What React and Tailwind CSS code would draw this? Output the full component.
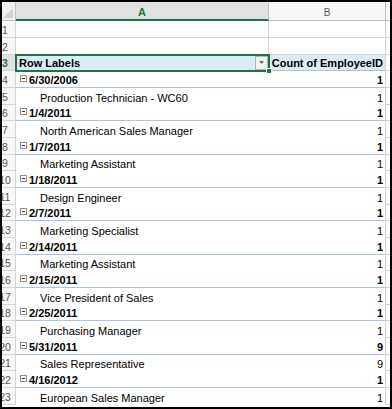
import React from "react";

const rows = [
  { n: 4, label: "6/30/2006", value: 1, date: true },
  { n: 5, label: "Production Technician - WC60", value: 1 },
  { n: 6, label: "1/4/2011", value: 1, date: true },
  { n: 7, label: "North American Sales Manager", value: 1 },
  { n: 8, label: "1/7/2011", value: 1, date: true },
  { n: 9, label: "Marketing Assistant", value: 1 },
  { n: 10, label: "1/18/2011", value: 1, date: true },
  { n: 11, label: "Design Engineer", value: 1 },
  { n: 12, label: "2/7/2011", value: 1, date: true },
  { n: 13, label: "Marketing Specialist", value: 1 },
  { n: 14, label: "2/14/2011", value: 1, date: true },
  { n: 15, label: "Marketing Assistant", value: 1 },
  { n: 16, label: "2/15/2011", value: 1, date: true },
  { n: 17, label: "Vice President of Sales", value: 1 },
  { n: 18, label: "2/25/2011", value: 1, date: true },
  { n: 19, label: "Purchasing Manager", value: 1 },
  { n: 20, label: "5/31/2011", value: 9, date: true },
  { n: 21, label: "Sales Representative", value: 9 },
  { n: 22, label: "4/16/2012", value: 1, date: true },
  { n: 23, label: "European Sales Manager", value: 1 },
];

function rowHeight(n) {
  return n % 3 === 0 ? "h-[16px]" : "h-[17px]";
}

function RowNum({ n, active }) {
  return (
    <div
      className={
        active
          ? "flex items-center justify-center pr-[5px] pt-[2px] border-r border-b border-[#d4d4d4] bg-[#e1e1e1] text-[10.5px] font-bold text-[#217346] whitespace-nowrap"
          : "flex items-center justify-center pr-[5px] pt-[2px] border-r border-b border-[#d4d4d4] bg-[#f8f8f8] text-[10.5px] text-[#555] whitespace-nowrap"
      }
    >
      {n}
    </div>
  );
}

function Collapse() {
  return (
    <div className="w-[7px] h-[7px] mb-[5px] mr-[2px] border border-[#8f8f8f] bg-white flex items-center justify-center shrink-0">
      <div className="w-[3px] h-px bg-[#333]" />
    </div>
  );
}

function PivotRow({ row }) {
  return (
    <div className={"grid grid-cols-[16px_253px_116px_7px] " + rowHeight(row.n)}>
      <RowNum n={row.n} />
      {row.date ? (
        <>
          <div className="flex items-end pl-[4px] border-b border-[#a9c4e4] font-bold">
            <Collapse />
            <span>{row.label}</span>
          </div>
          <div className="flex items-end justify-end pr-[2px] border-b border-[#a9c4e4] font-bold">
            {row.value}
          </div>
        </>
      ) : (
        <>
          <div className="flex items-end pl-[24px]">{row.label}</div>
          <div className="flex items-end justify-end pr-[2px]">{row.value}</div>
        </>
      )}
      <div className="border-l border-b border-[#d4d4d4]" />
    </div>
  );
}

export default function App() {
  return (
    <div className="relative w-[392px] h-[409px] overflow-hidden bg-white text-black text-[11px] leading-[13px] font-['Liberation_Sans',Arial,sans-serif]">
      {/* column headers */}
      <div className="grid grid-cols-[16px_253px_116px_7px] h-[21px]">
        <div className="relative border-r border-b border-[#bfbfbf] bg-[#f0f0f0]">
          <svg className="absolute right-[2px] bottom-[2px]" width="10" height="10" viewBox="0 0 10 10">
            <polygon points="10,0 10,10 0,10" fill="#d2d2d2" />
          </svg>
        </div>
        <div className="flex items-end justify-center bg-[#e1e1e1] border-r border-r-[#bfbfbf] border-b-2 border-b-[#217346] text-[#217346] font-bold">
          A
        </div>
        <div className="flex items-end justify-center pb-[1px] bg-[#f7f7f7] border-b border-[#bfbfbf] text-[10px] text-[#555]">
          B
        </div>
        <div className="bg-[#f7f7f7] border-l border-b border-[#bfbfbf]" />
      </div>

      {/* rows 1-2 */}
      {[1, 2].map((n) => (
        <div key={n} className={"grid grid-cols-[16px_253px_116px_7px] " + rowHeight(n)}>
          <RowNum n={n} />
          <div className="border-r border-b border-[#d4d4d4]" />
          <div className="border-b border-[#d4d4d4]" />
          <div className="border-l border-b border-[#d4d4d4]" />
        </div>
      ))}

      {/* pivot header row */}
      <div className={"grid grid-cols-[16px_253px_116px_7px] " + rowHeight(3)}>
        <RowNum n={3} active />
        <div className="relative flex items-center justify-between pl-[3px] bg-[#ddebf7] border-b border-[#a9c4e4] font-bold">
          <span className="self-end">Row Labels</span>
          <div className="w-[13px] h-[14px] mr-[1px] border border-[#b5b5b5] bg-[#f2f2f2] flex items-center justify-center">
            <svg width="5" height="3" viewBox="0 0 5 3">
              <polygon points="0,0 5,0 2.5,3" fill="#6f6f6f" />
            </svg>
          </div>
          <div className="pointer-events-none absolute -left-px -right-px -top-px -bottom-[2px] border-2 border-[#217346]">
            <div className="absolute -right-[4px] -bottom-[4px] w-[6px] h-[6px] bg-[#217346] border border-white" />
          </div>
        </div>
        <div className="flex items-end justify-end pr-[2px] bg-[#ddebf7] border-b border-[#a9c4e4] font-bold">
          Count of EmployeeID
        </div>
        <div className="border-l border-b border-[#d4d4d4]" />
      </div>

      {rows.map((row) => (
        <PivotRow key={row.n} row={row} />
      ))}

      <div className="pointer-events-none absolute inset-0 border-2 border-black" />
    </div>
  );
}
